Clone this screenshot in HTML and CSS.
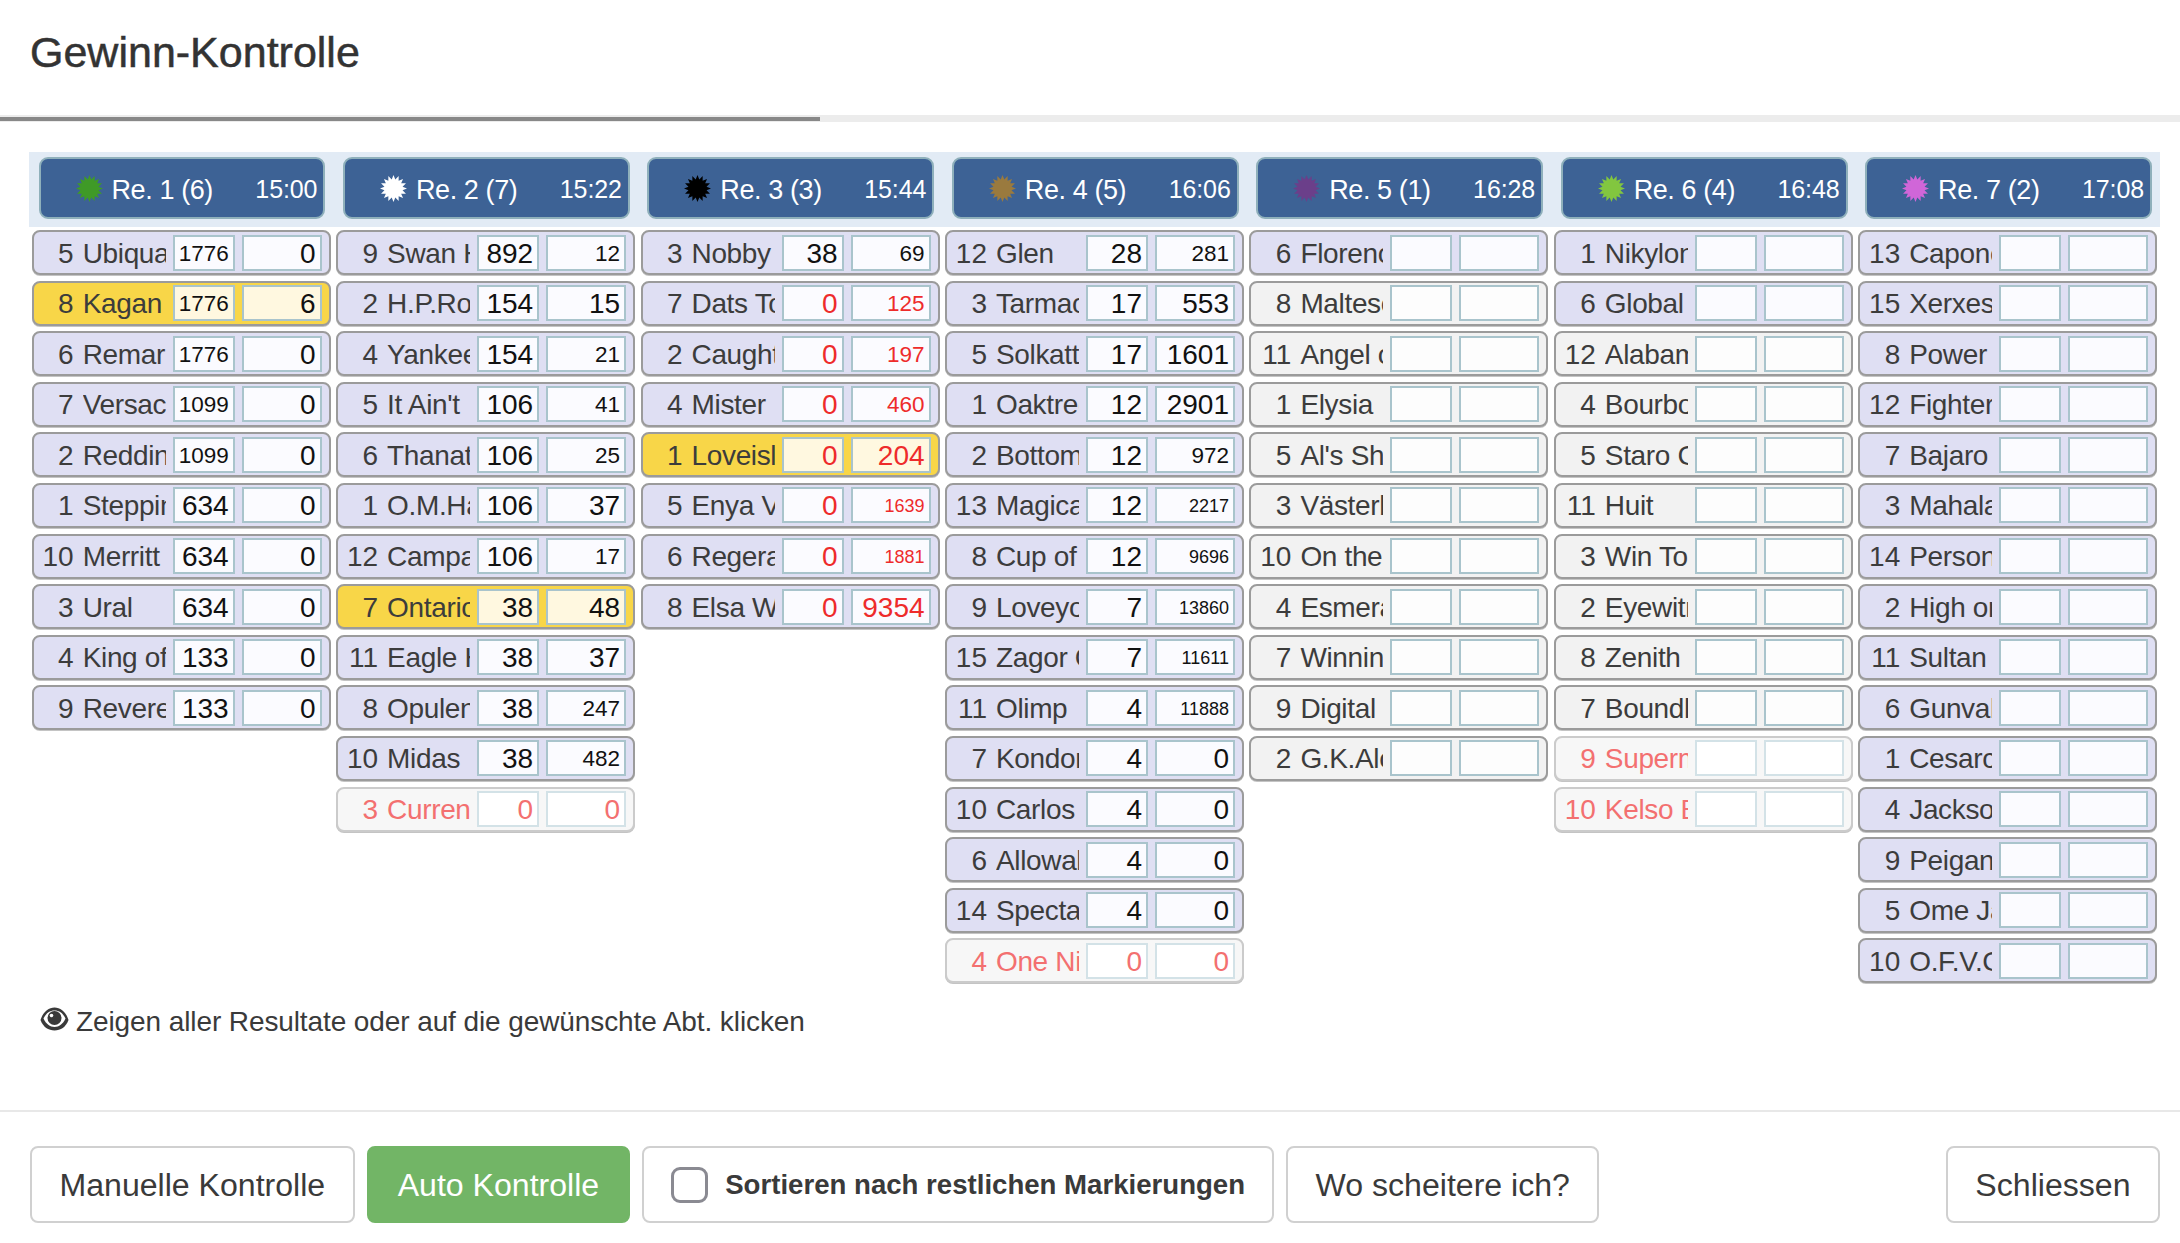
FILE: index.html
```html
<!DOCTYPE html>
<html lang="de">
<head>
<meta charset="utf-8">
<title>Gewinn-Kontrolle</title>
<link rel="stylesheet" href="styles.css">
</head>
<body>
<svg class="defs" width="0" height="0" aria-hidden="true"><symbol id="star" viewBox="0 0 24 24"><polygon points="12,0 13.6,3.96 16.6,.91 16.56,5.19 20.49,3.51 18.81,7.44 23.09,7.4 20.04,10.4 24,12 20.04,13.6 23.09,16.6 18.81,16.56 20.49,20.49 16.56,18.81 16.6,23.09 13.6,20.04 12,24 10.4,20.04 7.4,23.09 7.44,18.81 3.51,20.49 5.19,16.56 .91,16.6 3.96,13.6 0,12 3.96,10.4 .91,7.4 5.19,7.44 3.51,3.51 7.44,5.19 7.4,.91 10.4,3.96"/></symbol></svg>
<header class="top"><h1 class="title">Gewinn-Kontrolle</h1></header>
<div class="track"><div class="bar"></div></div>
<main class="board">
<div class="heads">
<div class="head"><div class="race"><svg class="star s1"><use href="#star"/></svg><span class="rname">Re. 1 (6)</span><span class="time">15:00</span></div></div>
<div class="head"><div class="race"><svg class="star s2"><use href="#star"/></svg><span class="rname">Re. 2 (7)</span><span class="time">15:22</span></div></div>
<div class="head"><div class="race"><svg class="star s3"><use href="#star"/></svg><span class="rname">Re. 3 (3)</span><span class="time">15:44</span></div></div>
<div class="head"><div class="race"><svg class="star s4"><use href="#star"/></svg><span class="rname">Re. 4 (5)</span><span class="time">16:06</span></div></div>
<div class="head"><div class="race"><svg class="star s5"><use href="#star"/></svg><span class="rname">Re. 5 (1)</span><span class="time">16:28</span></div></div>
<div class="head"><div class="race"><svg class="star s6"><use href="#star"/></svg><span class="rname">Re. 6 (4)</span><span class="time">16:48</span></div></div>
<div class="head"><div class="race"><svg class="star s7"><use href="#star"/></svg><span class="rname">Re. 7 (2)</span><span class="time">17:08</span></div></div>
</div>
<div class="cols">
<div class="col">
<div class="row"><span class="no">5</span><span class="name">Ubiquarian</span><span class="val a m">1776</span><span class="val b">0</span></div>
<div class="row hit"><span class="no">8</span><span class="name">Kagan</span><span class="val a m">1776</span><span class="val b">6</span></div>
<div class="row"><span class="no">6</span><span class="name">Remarkable</span><span class="val a m">1776</span><span class="val b">0</span></div>
<div class="row"><span class="no">7</span><span class="name">Versace</span><span class="val a m">1099</span><span class="val b">0</span></div>
<div class="row"><span class="no">2</span><span class="name">Redding</span><span class="val a m">1099</span><span class="val b">0</span></div>
<div class="row"><span class="no">1</span><span class="name">Steppin</span><span class="val a">634</span><span class="val b">0</span></div>
<div class="row"><span class="no">10</span><span class="name">Merritt</span><span class="val a">634</span><span class="val b">0</span></div>
<div class="row"><span class="no">3</span><span class="name">Ural</span><span class="val a">634</span><span class="val b">0</span></div>
<div class="row"><span class="no">4</span><span class="name">King of</span><span class="val a">133</span><span class="val b">0</span></div>
<div class="row"><span class="no">9</span><span class="name">Reverend</span><span class="val a">133</span><span class="val b">0</span></div>
</div>
<div class="col">
<div class="row"><span class="no">9</span><span class="name">Swan Hill</span><span class="val a">892</span><span class="val b m">12</span></div>
<div class="row"><span class="no">2</span><span class="name">H.P.Rock</span><span class="val a">154</span><span class="val b">15</span></div>
<div class="row"><span class="no">4</span><span class="name">Yankees</span><span class="val a">154</span><span class="val b m">21</span></div>
<div class="row"><span class="no">5</span><span class="name">It Ain't</span><span class="val a">106</span><span class="val b m">41</span></div>
<div class="row"><span class="no">6</span><span class="name">Thanatos</span><span class="val a">106</span><span class="val b m">25</span></div>
<div class="row"><span class="no">1</span><span class="name">O.M.Hart</span><span class="val a">106</span><span class="val b">37</span></div>
<div class="row"><span class="no">12</span><span class="name">Campari</span><span class="val a">106</span><span class="val b m">17</span></div>
<div class="row hit"><span class="no">7</span><span class="name">Ontario</span><span class="val a">38</span><span class="val b">48</span></div>
<div class="row"><span class="no">11</span><span class="name">Eagle Hill</span><span class="val a">38</span><span class="val b">37</span></div>
<div class="row"><span class="no">8</span><span class="name">Opulent</span><span class="val a">38</span><span class="val b m">247</span></div>
<div class="row"><span class="no">10</span><span class="name">Midas</span><span class="val a">38</span><span class="val b m">482</span></div>
<div class="row out"><span class="no">3</span><span class="name">Current</span><span class="val a">0</span><span class="val b">0</span></div>
</div>
<div class="col">
<div class="row"><span class="no">3</span><span class="name">Nobby</span><span class="val a">38</span><span class="val b m">69</span></div>
<div class="row"><span class="no">7</span><span class="name">Dats Top</span><span class="val a red">0</span><span class="val b m red">125</span></div>
<div class="row"><span class="no">2</span><span class="name">Caught</span><span class="val a red">0</span><span class="val b m red">197</span></div>
<div class="row"><span class="no">4</span><span class="name">Mister</span><span class="val a red">0</span><span class="val b m red">460</span></div>
<div class="row hit"><span class="no">1</span><span class="name">Loveisland</span><span class="val a red">0</span><span class="val b red">204</span></div>
<div class="row"><span class="no">5</span><span class="name">Enya Van</span><span class="val a red">0</span><span class="val b s red">1639</span></div>
<div class="row"><span class="no">6</span><span class="name">Regerato</span><span class="val a red">0</span><span class="val b s red">1881</span></div>
<div class="row"><span class="no">8</span><span class="name">Elsa Ward</span><span class="val a red">0</span><span class="val b red">9354</span></div>
</div>
<div class="col">
<div class="row"><span class="no">12</span><span class="name">Glen</span><span class="val a">28</span><span class="val b m">281</span></div>
<div class="row"><span class="no">3</span><span class="name">Tarmac</span><span class="val a">17</span><span class="val b">553</span></div>
<div class="row"><span class="no">5</span><span class="name">Solkatt</span><span class="val a">17</span><span class="val b">1601</span></div>
<div class="row"><span class="no">1</span><span class="name">Oaktree</span><span class="val a">12</span><span class="val b">2901</span></div>
<div class="row"><span class="no">2</span><span class="name">Bottom</span><span class="val a">12</span><span class="val b m">972</span></div>
<div class="row"><span class="no">13</span><span class="name">Magical</span><span class="val a">12</span><span class="val b s">2217</span></div>
<div class="row"><span class="no">8</span><span class="name">Cup of</span><span class="val a">12</span><span class="val b s">9696</span></div>
<div class="row"><span class="no">9</span><span class="name">Loveyou</span><span class="val a">7</span><span class="val b s">13860</span></div>
<div class="row"><span class="no">15</span><span class="name">Zagor City</span><span class="val a">7</span><span class="val b s">11611</span></div>
<div class="row"><span class="no">11</span><span class="name">Olimp</span><span class="val a">4</span><span class="val b s">11888</span></div>
<div class="row"><span class="no">7</span><span class="name">Kondor</span><span class="val a">4</span><span class="val b">0</span></div>
<div class="row"><span class="no">10</span><span class="name">Carlos</span><span class="val a">4</span><span class="val b">0</span></div>
<div class="row"><span class="no">6</span><span class="name">Allowable</span><span class="val a">4</span><span class="val b">0</span></div>
<div class="row"><span class="no">14</span><span class="name">Spectacle</span><span class="val a">4</span><span class="val b">0</span></div>
<div class="row out"><span class="no">4</span><span class="name">One Nil</span><span class="val a">0</span><span class="val b">0</span></div>
</div>
<div class="col">
<div class="row"><span class="no">6</span><span class="name">Florence</span><span class="val a"></span><span class="val b"></span></div>
<div class="row off"><span class="no">8</span><span class="name">Maltese</span><span class="val a"></span><span class="val b"></span></div>
<div class="row off"><span class="no">11</span><span class="name">Angel of</span><span class="val a"></span><span class="val b"></span></div>
<div class="row off"><span class="no">1</span><span class="name">Elysia</span><span class="val a"></span><span class="val b"></span></div>
<div class="row off"><span class="no">5</span><span class="name">Al's Shot</span><span class="val a"></span><span class="val b"></span></div>
<div class="row off"><span class="no">3</span><span class="name">Västerby</span><span class="val a"></span><span class="val b"></span></div>
<div class="row off"><span class="no">10</span><span class="name">On the</span><span class="val a"></span><span class="val b"></span></div>
<div class="row off"><span class="no">4</span><span class="name">Esmeralda</span><span class="val a"></span><span class="val b"></span></div>
<div class="row off"><span class="no">7</span><span class="name">Winning</span><span class="val a"></span><span class="val b"></span></div>
<div class="row off"><span class="no">9</span><span class="name">Digital</span><span class="val a"></span><span class="val b"></span></div>
<div class="row off"><span class="no">2</span><span class="name">G.K.Alone</span><span class="val a"></span><span class="val b"></span></div>
</div>
<div class="col">
<div class="row"><span class="no">1</span><span class="name">Nikylon</span><span class="val a"></span><span class="val b"></span></div>
<div class="row"><span class="no">6</span><span class="name">Global</span><span class="val a"></span><span class="val b"></span></div>
<div class="row off"><span class="no">12</span><span class="name">Alabama</span><span class="val a"></span><span class="val b"></span></div>
<div class="row off"><span class="no">4</span><span class="name">Bourbon</span><span class="val a"></span><span class="val b"></span></div>
<div class="row off"><span class="no">5</span><span class="name">Staro Cup</span><span class="val a"></span><span class="val b"></span></div>
<div class="row off"><span class="no">11</span><span class="name">Huit</span><span class="val a"></span><span class="val b"></span></div>
<div class="row off"><span class="no">3</span><span class="name">Win Top</span><span class="val a"></span><span class="val b"></span></div>
<div class="row off"><span class="no">2</span><span class="name">Eyewitness</span><span class="val a"></span><span class="val b"></span></div>
<div class="row off"><span class="no">8</span><span class="name">Zenith</span><span class="val a"></span><span class="val b"></span></div>
<div class="row off"><span class="no">7</span><span class="name">Boundless</span><span class="val a"></span><span class="val b"></span></div>
<div class="row out"><span class="no">9</span><span class="name">Superman</span><span class="val a"></span><span class="val b"></span></div>
<div class="row out"><span class="no">10</span><span class="name">Kelso Boy</span><span class="val a"></span><span class="val b"></span></div>
</div>
<div class="col">
<div class="row"><span class="no">13</span><span class="name">Capone</span><span class="val a"></span><span class="val b"></span></div>
<div class="row"><span class="no">15</span><span class="name">Xerxes</span><span class="val a"></span><span class="val b"></span></div>
<div class="row"><span class="no">8</span><span class="name">Power</span><span class="val a"></span><span class="val b"></span></div>
<div class="row"><span class="no">12</span><span class="name">Fighter</span><span class="val a"></span><span class="val b"></span></div>
<div class="row"><span class="no">7</span><span class="name">Bajaro</span><span class="val a"></span><span class="val b"></span></div>
<div class="row"><span class="no">3</span><span class="name">Mahalaxmi</span><span class="val a"></span><span class="val b"></span></div>
<div class="row"><span class="no">14</span><span class="name">Persona</span><span class="val a"></span><span class="val b"></span></div>
<div class="row"><span class="no">2</span><span class="name">High on</span><span class="val a"></span><span class="val b"></span></div>
<div class="row"><span class="no">11</span><span class="name">Sultan</span><span class="val a"></span><span class="val b"></span></div>
<div class="row"><span class="no">6</span><span class="name">Gunvald</span><span class="val a"></span><span class="val b"></span></div>
<div class="row"><span class="no">1</span><span class="name">Cesarco</span><span class="val a"></span><span class="val b"></span></div>
<div class="row"><span class="no">4</span><span class="name">Jackson</span><span class="val a"></span><span class="val b"></span></div>
<div class="row"><span class="no">9</span><span class="name">Peigan</span><span class="val a"></span><span class="val b"></span></div>
<div class="row"><span class="no">5</span><span class="name">Ome Jay</span><span class="val a"></span><span class="val b"></span></div>
<div class="row"><span class="no">10</span><span class="name">O.F.V.Club</span><span class="val a"></span><span class="val b"></span></div>
</div>
</div>
<p class="note"><svg class="eye" viewBox="0 0 29 24"><path d="M.5 13C3 5 8.500 .5 14.500 .5S26 5 28.500 13C26 20 20.500 23.500 14.500 23.500S3 20 .5 13Z" fill="#3a3a3a"/><path d="M3.500 11.500C6 6 10 3.500 14.500 3.500S23 6 25.500 11.500C23 17 19 20 14.500 20S6 17 3.500 11.500Z" fill="#fff"/><circle cx="14.500" cy="11" r="7" fill="#3a3a3a"/><circle cx="11.500" cy="8.500" r="1.800" fill="#fff"/></svg> Zeigen aller Resultate oder auf die gewünschte Abt. klicken</p>
</main>
<footer class="foot">
<button class="btn">Manuelle Kontrolle</button>
<button class="btn go">Auto Kontrolle</button>
<label class="btn check"><span class="box"></span><span>Sortieren nach restlichen Markierungen</span></label>
<button class="btn">Wo scheitere ich?</button>
<button class="btn close">Schliessen</button>
</footer>
</body>
</html>
```
FILE: styles.css
```css
* { box-sizing: border-box; }
html, body { margin: 0; height: 1243px; overflow: hidden; }
body { background: #fff; color: #3a3a3a; font-family: "Liberation Sans", Arial, sans-serif; }
.defs { position: absolute; }
.top { height: 115px; padding: 28px 0 0 30px; }
.title { margin: 0; font-size: 43px; line-height: 48px; font-weight: 400; color: #333; -webkit-text-stroke: .5px #333; }
.track { height: 7px; background: #ececec; padding-top: 2px; }
.bar { width: 820px; height: 4px; background: #888; }
.board { padding: 30px 20px 0 29px; height: 988px; }
.heads { display: grid; grid-template-columns: repeat(7, 1fr); height: 75px; background: #e2ebf5; }
.head { padding: 5px 8px 8px 9.5px; }
.race { display: flex; align-items: center; height: 62px; padding: 0 6px 0 35px; background: #3d6295; border: 2px solid #8fb0bb; border-radius: 9px; color: #fff; }
.star { width: 27px; height: 27px; flex: none; }
.s1 { fill: #3f9a27; }
.s2 { fill: #fff; }
.s3 { fill: #000; }
.s4 { fill: #9a7a3e; }
.s5 { fill: #6b3f8a; }
.s6 { fill: #82c63f; }
.s7 { fill: #d066d8; }
.rname { margin-left: 9px; font-size: 27px; letter-spacing: -.4px; line-height: 30px; padding-top: 4px; }
.time { margin-left: auto; font-size: 25px; letter-spacing: -.1px; line-height: 30px; margin-top: 1px; }
.cols { display: grid; grid-template-columns: repeat(7, 1fr); margin-top: 3px; align-items: start; }
.col { padding: 0 2.7px; }
.row { display: flex; align-items: center; height: 45px; margin-bottom: 5.6px; background: #dfdff3; border: 2px solid #9b9b9b; border-radius: 8px; box-shadow: 0 1px 0 #c4c4c4; font-size: 28px; color: #3c3c3c; }
.no { width: 40px; padding-top: 2px; flex: none; text-align: right; }
.name { width: 83px; margin-left: 9px; padding-top: 2px; flex: none; overflow: hidden; white-space: nowrap; letter-spacing: -.35px; }
.val { height: 36px; line-height: 34px; margin-left: 7px; padding-right: 4px; flex: none; text-align: right; background: #fbfbff; border: 2px solid #a9c4cc; color: #111; }
.a { width: 62px; }
.b { width: 80px; }
.m { font-size: 22.5px; }
.s { font-size: 18px; }
.red { color: #ee2b2b; }
.hit { background: #f8d648; }
.hit .val { background: #fff8e0; }
.off { background: #f2f2f2; }
.off .val { background: #fdfdfd; }
.out { background: #f7f7f7; border-color: #cbcbcb; color: #f37070; }
.out .val { background: #fff; border-color: #d3e2e7; color: #f37070; }
.note { margin: 15px 0 0 11px; display: flex; align-items: center; font-size: 28px; letter-spacing: -.1px; line-height: 36px; color: #3a3a3a; }
.eye { width: 29px; height: 24px; margin-right: 7px; margin-top: -6px; flex: none; }
.foot { display: flex; gap: 12px; height: 131px; padding: 34px 20px 0 30px; border-top: 2px solid #e8e8e8; }
.btn { display: flex; align-items: center; height: 77px; padding: 1px 27.5px 0; background: #fff; border: 2px solid #d0d0d0; border-radius: 8px; font: 32.1px/1 "Liberation Sans", Arial, sans-serif; color: #3a3a3a; }
.go { background: #72b566; border-color: #72b566; color: #fff; padding: 1px 29px 0; }
.check { font-size: 27.6px; font-weight: 700; padding: 1px 27px 0; }
.box { width: 37px; height: 36px; margin-right: 17px; border: 3px solid #8a8a92; border-radius: 9px; background: #fff; }
.close { margin-left: auto; }
```
